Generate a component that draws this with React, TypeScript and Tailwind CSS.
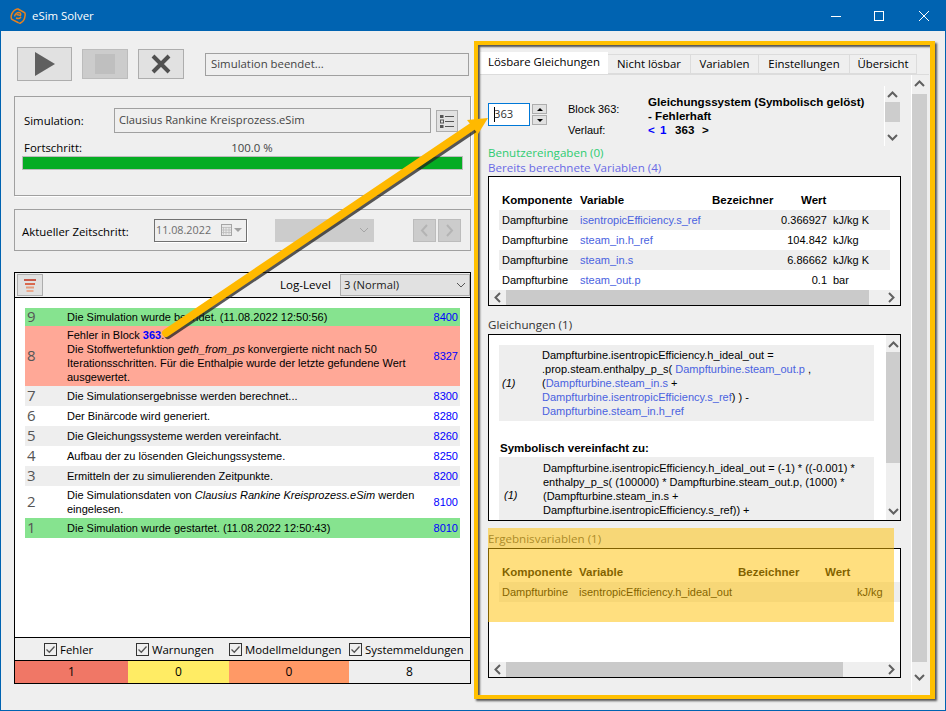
import React from "react";

const ui = { fontFamily: '"Open Sans","Noto Sans",sans-serif' };
const body = { fontFamily: '"Liberation Sans",Arial,sans-serif' };

function Chevron({ dir, cls = "" }: { dir: "up" | "down" | "left" | "right"; cls?: string }) {
  const d = {
    up: "M1 7 L5.5 2.5 L10 7",
    down: "M1 3 L5.5 7.5 L10 3",
    left: "M7 1 L2.5 5.5 L7 10",
    right: "M3 1 L7.5 5.5 L3 10",
  }[dir];
  return (
    <svg width="11" height="11" viewBox="0 0 11 11" className={cls}>
      <path d={d} fill="none" stroke="#606060" strokeWidth="2" />
    </svg>
  );
}

function VScroll({ thumbH, head = "h-[17px]" }: { thumbH: number; head?: string }) {
  return (
    <div className="w-[16px] h-full flex flex-col items-center border-l border-white bg-[#efefef]">
      <div className={`${head} w-full flex items-center justify-center shrink-0 pt-[3px]`}><Chevron dir="up" /></div>
      <div className="flex-1 w-full">
        <div className="w-full bg-[#cdcdcd]" style={{ height: thumbH }} />
      </div>
      <div className="h-[17px] w-full flex items-center justify-center shrink-0"><Chevron dir="down" /></div>
    </div>
  );
}

function HScroll({ thumbW }: { thumbW: number }) {
  return (
    <div className="h-[15px] flex items-center bg-[#efefef]">
      <div className="w-[17px] flex justify-center pl-[1px]"><Chevron dir="left" /></div>
      <div className="flex-1 h-full"><div className="h-full bg-[#cacaca]" style={{ width: thumbW }} /></div>
      <div className="w-[17px] flex justify-center"><Chevron dir="right" /></div>
    </div>
  );
}

const logRows = [
  { n: "9", code: "8400", h: "h-[18px]", bg: "bg-[#86e38f]", t: <>Die Simulation wurde beendet. (11.08.2022 12:50:56)</> },
  {
    n: "8", code: "8327", h: "h-[60px]", bg: "bg-[#ffa897]",
    t: (
      <>
        Fehler in Block <b className="text-[#0000ff] font-bold">363</b>.<br />
        Die Stoffwertefunktion <i>geth_from_ps</i> konvergierte nicht nach 50<br />
        Iterationsschritten. Für die Enthalpie wurde der letzte gefundene Wert<br />
        ausgewertet.
      </>
    ),
  },
  { n: "7", code: "8300", h: "h-[20px]", bg: "bg-[#eeeeee]", t: <>Die Simulationsergebnisse werden berechnet...</> },
  { n: "6", code: "8280", h: "h-[20px]", bg: "bg-white", t: <>Der Binärcode wird generiert.</> },
  { n: "5", code: "8260", h: "h-[20px]", bg: "bg-[#eeeeee]", t: <>Die Gleichungssysteme werden vereinfacht.</> },
  { n: "4", code: "8250", h: "h-[20px]", bg: "bg-white", t: <>Aufbau der zu lösenden Gleichungssysteme.</> },
  { n: "3", code: "8200", h: "h-[20px]", bg: "bg-[#eeeeee]", t: <>Ermitteln der zu simulierenden Zeitpunkte.</> },
  {
    n: "2", code: "8100", h: "h-[32px]", bg: "bg-white",
    t: <>Die Simulationsdaten von <i>Clausius Rankine Kreisprozess.eSim</i> werden<br />eingelesen.</>,
  },
  { n: "1", code: "8010", h: "h-[20px]", bg: "bg-[#86e38f]", t: <>Die Simulation wurde gestartet. (11.08.2022 12:50:43)</> },
];

function Check({ label, w, pl }: { label: string; w: string; pl: string }) {
  return (
    <div className={`${w} ${pl} flex items-center gap-[3px] h-full`}>
      <span className="w-[13px] h-[13px] border border-[#333] bg-[#efefef] flex items-center justify-center">
        <svg width="11" height="11" viewBox="0 0 11 11">
          <path d="M1.5 5.5 L4.3 8.3 L9.5 2.5" fill="none" stroke="#555" strokeWidth="1.3" />
        </svg>
      </span>
      <span className="text-[11.4px] text-black leading-none pt-[1px]" style={ui}>{label}</span>
    </div>
  );
}

function Left() {
  return (
    <div className="ml-[13px] w-[457px] shrink-0 flex flex-col">
      {/* toolbar */}
      <div className="mt-[16px] ml-[3px] h-[34px] flex items-center">
        <div className="w-[55px] h-[34px] bg-[#e1e1e1] border border-[#adadad] flex items-center justify-center">
          <svg width="22" height="26" viewBox="0 0 22 26"><path d="M1 1 L21 13 L1 25 Z" fill="#5f5f5f" /></svg>
        </div>
        <div className="ml-[10px] w-[46px] h-[30px] bg-[#cccccc] border border-[#bcbcbc] flex items-center justify-center">
          <div className="w-[20px] h-[20px] bg-[#bfbfbf]" />
        </div>
        <div className="ml-[10px] w-[46px] h-[30px] bg-[#e1e1e1] border border-[#adadad] flex items-center justify-center">
          <svg width="20" height="20" viewBox="0 0 20 20"><path d="M2 2 L18 18 M18 2 L2 18" stroke="#505050" strokeWidth="4" /></svg>
        </div>
        <div className="ml-[21px] w-[264px] h-[23px] border border-[#a0a0a0] flex items-center pl-[5px] text-[11.4px] text-[#444]" style={ui}>
          Simulation beendet...
        </div>
      </div>

      {/* simulation group */}
      <div className="mt-[15px] h-[100px] border border-[#a0a0a0] shadow-[1px_1px_0_#fff] flex flex-col">
        <div className="mt-[11px] flex items-center h-[25px]">
          <span className="ml-[9px] w-[90px] text-[11.4px] text-black" style={ui}>Simulation:</span>
          <div className="w-[317px] h-[25px] border border-[#a0a0a0] flex items-center pl-[4px] text-[11.2px] text-[#444]" style={ui}>
            Clausius Rankine Kreisprozess.eSim
          </div>
          <div className="ml-[5px] w-[22px] h-[22px] bg-[#e1e1e1] border border-[#adadad] flex items-center justify-center">
            <svg width="16" height="16" viewBox="0 0 16 16">
              <rect x="1" y="2" width="3.5" height="3" fill="#555" />
              <rect x="1.5" y="7" width="3" height="3" fill="none" stroke="#555" />
              <rect x="1" y="12" width="3.5" height="3" fill="#555" />
              <path d="M6 3.5H15M6 8.5H15M6 13.5H15" stroke="#555" strokeWidth="1" />
            </svg>
          </div>
        </div>
        <div className="mt-[7px] h-[16px] flex items-center text-[11.4px]" style={ui}>
          <span className="ml-[9px] w-[169px] text-black">Fortschritt:</span>
          <span className="w-[118px] text-center text-[#444]">100.0 %</span>
        </div>
        <div className="ml-[7px] w-[441px] h-[14px] bg-[#05ac23] border border-[#bcbcbc]" />
      </div>

      {/* time group */}
      <div className="mt-[13px] h-[42px] border border-[#a0a0a0] flex items-center">
        <span className="ml-[7px] w-[132px] text-[11.4px] text-black pt-[3px]" style={ui}>Aktueller Zeitschritt:</span>
        <div className="w-[93px] h-[23px] border border-[#707070] flex items-center pl-[1px] text-[10.8px] text-[#6d6d6d] shadow-[1px_1px_0_#fff]" style={ui}>
          <span className="w-[57px] pt-[1px]">11.08.2022</span>
          <svg className="ml-[8px]" width="11" height="12" viewBox="0 0 11 12">
            <rect x="0.5" y="0.5" width="10" height="11" fill="#e8e8e8" stroke="#a5a5a5" />
            <path d="M2.5 3V10.5M5 3V10.5M8 3V10.5M1 3.5H10M1 6H10M1 8.5H10" stroke="#bdbdbd" strokeWidth="0.8" />
          </svg>
          <span className="ml-[2px] w-0 h-0 border-x-[4px] border-x-transparent border-t-[4px] border-t-[#a0a0a0]" />
        </div>
        <div className="ml-[28px] w-[99px] h-[23px] bg-[#cccccc] flex items-center justify-end pr-[5px]">
          <svg width="10" height="6" viewBox="0 0 10 6"><path d="M1 1 L5 5 L9 1" fill="none" stroke="#a5a5a5" /></svg>
        </div>
        <div className="ml-[39px] w-[23px] h-[23px] bg-[#cccccc] border border-[#bcbcbc] flex items-center justify-center">
          <svg width="9" height="13" viewBox="0 0 9 13"><path d="M7 1 L2 6.5 L7 12" fill="none" stroke="#b4b4b4" strokeWidth="2" /></svg>
        </div>
        <div className="ml-[2px] w-[23px] h-[23px] bg-[#cccccc] border border-[#bcbcbc] flex items-center justify-center">
          <svg width="9" height="13" viewBox="0 0 9 13"><path d="M2 1 L7 6.5 L2 12" fill="none" stroke="#b4b4b4" strokeWidth="2" /></svg>
        </div>
      </div>

      {/* log */}
      <div className="mt-[21px] h-[412px] w-[457px] border border-black flex flex-col">
        <div className="h-[25px] shrink-0 border-b border-black flex items-center">
          <div className="ml-[2px] w-[26px] h-[22px] bg-[#e1e1e1] border border-[#adadad] flex items-center justify-center">
            <svg width="14" height="14" viewBox="0 0 14 14">
              <path d="M1 2H13" stroke="#c85a4a" strokeWidth="2" />
              <path d="M2 6H12" stroke="#d9694f" strokeWidth="2" />
              <path d="M3 9.5H11" stroke="#e59a7a" strokeWidth="2" />
              <path d="M3.5 13H10.5" stroke="#eaa88c" strokeWidth="2" />
            </svg>
          </div>
          <span className="ml-[237px] w-[60px] text-[11.6px] text-black" style={ui}>Log-Level</span>
          <div className="w-[130px] h-[22px] bg-[#e1e1e1] border border-[#adadad] flex items-center justify-between px-[3px] text-[11.2px] text-[#222]" style={ui}>
            <span>3 (Normal)</span>
            <svg width="10" height="6" viewBox="0 0 10 6"><path d="M1 1 L5 5 L9 1" fill="none" stroke="#555" /></svg>
          </div>
        </div>
        <div className="flex-1 bg-white pt-[10px] pl-[10px] pr-[10px]" style={body}>
          {logRows.map((r) => (
            <div key={r.n} className={`${r.h} ${r.bg} flex items-center text-[11px] leading-[14px] text-black`}>
              <span className="w-[42px] shrink-0 pl-[2px] pb-[2px] text-[15px] text-[#555]" style={ui}>{r.n}</span>
              <span className="flex-1 whitespace-nowrap">{r.t}</span>
              <span className="pr-[2px] text-[11px] text-[#0000ff]">{r.code}</span>
            </div>
          ))}
        </div>
        <div className="h-[23px] shrink-0 border-t border-black flex items-center bg-[#efefef]">
          <Check label="Fehler" w="w-[121px]" pl="pl-[29px]" />
          <Check label="Warnungen" w="w-[93px]" pl="pl-0" />
          <Check label="Modellmeldungen" w="w-[120px]" pl="pl-0" />
          <Check label="Systemmeldungen" w="w-[120px]" pl="pl-0" />
        </div>
        <div className="h-[23px] shrink-0 border-t border-black flex text-[12px] text-black" style={ui}>
          <div className="w-[113px] bg-[#f07766] flex items-center justify-center">1</div>
          <div className="w-[101px] bg-[#ffec64] flex items-center justify-center">0</div>
          <div className="w-[120px] bg-[#ff9966] flex items-center justify-center">0</div>
          <div className="flex-1 bg-[#eeeeee] flex items-center justify-center">8</div>
        </div>
      </div>
    </div>
  );
}

const tabs = [
  { t: "Nicht lösbar", w: "w-[83px]" },
  { t: "Variablen", w: "w-[68px]" },
  { t: "Einstellungen", w: "w-[91px]" },
  { t: "Übersicht", w: "w-[67px]" },
];

const vars = [
  { v: "isentropicEfficiency.s_ref", val: "0.366927", u: "kJ/kg K", bg: "bg-[#eeeeee]" },
  { v: "steam_in.h_ref", val: "104.842", u: "kJ/kg", bg: "bg-white" },
  { v: "steam_in.s", val: "6.86662", u: "kJ/kg K", bg: "bg-[#eeeeee]" },
  { v: "steam_out.p", val: "0.1", u: "bar", bg: "bg-white" },
];

const L = ({ children }: { children: React.ReactNode }) => <span className="text-[#4a62e0]">{children}</span>;

function Right() {
  return (
    <div className="ml-[9px] w-[449px] shrink-0 flex flex-col pt-[21px] pb-[18px]">
      <div className="h-[22px] shrink-0 flex items-end text-[11.4px] text-black" style={ui}>
        <div className="w-[128px] h-[22px] bg-white flex items-center justify-center pb-[2px]">Lösbare Gleichungen</div>
        {tabs.map((t) => (
          <div key={t.t} className={`${t.w} h-[20px] bg-[#efefef] border border-l-0 border-[#dcdcdc] flex items-center justify-center`}>{t.t}</div>
        ))}
      </div>
      <div className="flex-1 flex bg-[#efefef] border-t border-[#dcdcdc] min-h-0">
        <div className="w-[432px] shrink-0 pl-[8px] flex flex-col border-r border-white">
          {/* block header */}
          <div className="h-[60px] mt-[11px] shrink-0 flex">
            <div className="w-[396px] flex">
              <div className="mt-[17px] w-[42px] h-[23px] bg-white border border-[#0078d7] flex items-center pl-[5px] text-[11.2px] text-[#333]" style={ui}>
                <span className="w-[1px] h-[15px] bg-black -mr-[1px]" />363
              </div>
              <div className="ml-[2px] mt-[18px] flex flex-col gap-[1px]">
                <div className="w-[15px] h-[10px] bg-[#e1e1e1] border border-[#adadad] flex items-center justify-center">
                  <span className="w-0 h-0 border-x-[3px] border-x-transparent border-b-[3px] border-b-black" />
                </div>
                <div className="w-[15px] h-[10px] bg-[#e1e1e1] border border-[#adadad] flex items-center justify-center">
                  <span className="w-0 h-0 border-x-[3px] border-x-transparent border-t-[3px] border-t-black" />
                </div>
              </div>
              <div className="ml-[21px] w-[80px] text-[11px] text-black" style={body}>
                <div className="mt-[16px] h-[14px] leading-[14px]">Block 363:</div>
                <div className="mt-[7px] h-[14px] leading-[14px]">Verlauf:</div>
              </div>
              <div className="text-[11.6px] leading-[14px] font-bold text-black pt-[9px]" style={body}>
                <div>Gleichungssystem (Symbolisch gelöst)</div>
                <div>- Fehlerhaft</div>
                <div className="flex">
                  <span className="text-[#0000ff] w-[12px]">&lt;</span>
                  <span className="text-[#0000ff] w-[15px]">1</span>
                  <span className="w-[27px]">363</span>
                  <span>&gt;</span>
                </div>
              </div>
            </div>
            <VScroll thumbH={20} head="h-[16px]" />
          </div>

          <div className="-mt-[1px] pb-[1px] text-[11.6px] leading-[15px]" style={ui}>
            <div className="text-[#2ecc71]">Benutzereingaben (0)</div>
            <div className="text-[#6a6ae6]">Bereits berechnete Variablen (4)</div>
          </div>

          <div className="w-[413px] h-[130px] bg-white border border-black flex flex-col shrink-0" style={body}>
            <div className="flex-1 pl-[10px] pr-[10px] text-[11px] leading-[14px] text-black">
              <div className="h-[33px] pt-[16px] flex font-bold text-[11.5px]">
                <span className="w-[3px]" />
                <span className="w-[78px]">Komponente</span>
                <span className="w-[132px]">Variable</span>
                <span className="w-[89px] whitespace-nowrap">Bezeichner</span>
                <span>Wert</span>
              </div>
              {vars.map((r) => (
                <div key={r.v} className={`${r.bg} h-[20px] flex items-center`}>
                  <span className="w-[3px]" />
                  <span className="w-[78px]">Dampfturbine</span>
                  <span className="w-[160px] text-[#4a62e0]">{r.v}</span>
                  <span className="w-[87px] text-right">{r.val}</span>
                  <span className="ml-[6px]">{r.u}</span>
                </div>
              ))}
            </div>
            <HScroll thumbW={363} />
          </div>

          <div className="mt-[11px] h-[17px] text-[11.6px] text-[#333] leading-[15px]" style={ui}>Gleichungen (1)</div>

          <div className="w-[413px] h-[187px] bg-white border border-black flex shrink-0 overflow-hidden" style={body}>
            <div className="w-[396px] shrink-0 pl-[10px] pr-[11px] pt-[10px] text-[11px] leading-[14px] text-black overflow-hidden">
              <div className="h-[76px] bg-[#eeeeee] flex items-center">
                <i className="w-[43px] shrink-0 pl-[3px]">(1)</i>
                <div className="whitespace-nowrap">
                  Dampfturbine.isentropicEfficiency.h_ideal_out =<br />
                  .prop.steam.enthalpy_p_s( <L>Dampfturbine.steam_out.p</L> ,<br />
                  (<L>Dampfturbine.steam_in.s</L> +<br />
                  <L>Dampfturbine.isentropicEfficiency.s_ref</L>) ) -<br />
                  <L>Dampfturbine.steam_in.h_ref</L>
                </div>
              </div>
              <div className="mt-[20px] pl-[1px] h-[16px] leading-[14px] font-bold text-[11.5px]">Symbolisch vereinfacht zu:</div>
              <div className="h-[63px] bg-[#eeeeee] flex items-start pt-[4px]">
                <i className="w-[44px] shrink-0 pl-[5px] mt-[27px]">(1)</i>
                <div className="whitespace-nowrap">
                  Dampfturbine.isentropicEfficiency.h_ideal_out = (-1) * ((-0.001) *<br />
                  enthalpy_p_s( (100000) * Dampfturbine.steam_out.p, (1000) *<br />
                  (Dampfturbine.steam_in.s +<br />
                  Dampfturbine.isentropicEfficiency.s_ref)) +
                </div>
              </div>
            </div>
            <VScroll thumbH={111} />
          </div>

          <div className="mt-[10px] h-[17px] text-[11.6px] text-[#555] leading-[15px]" style={ui}>Ergebnisvariablen (1)</div>

          <div className="w-[413px] h-[130px] bg-white border border-black flex flex-col shrink-0" style={body}>
            <div className="flex-1 pl-[10px] text-[11px] leading-[14px] text-black">
              <div className="h-[33px] pt-[16px] flex font-bold text-[11.5px]">
                <span className="w-[3px]" />
                <span className="w-[77px]">Komponente</span>
                <span className="w-[159px]">Variable</span>
                <span className="w-[87px] whitespace-nowrap">Bezeichner</span>
                <span>Wert</span>
              </div>
              <div className="bg-[#eeeeee] h-[20px] flex items-center">
                <span className="w-[3px]" />
                <span className="w-[77px]">Dampfturbine</span>
                <span className="w-[278px]">isentropicEfficiency.h_ideal_out</span>
                <span>kJ/kg</span>
              </div>
            </div>
            <HScroll thumbW={337} />
          </div>
        </div>
        <div className="w-[15px] shrink-0 flex flex-col items-center">
          <div className="h-[19px] w-full flex items-center justify-center"><Chevron dir="up" /></div>
          <div className="w-full h-[568px] bg-[#cdcdcd]" />
          <div className="flex-1 w-full flex items-center justify-center"><Chevron dir="down" /></div>
        </div>
      </div>
    </div>
  );
}

export default function App() {
  return (
    <div className="relative w-[946px] h-[711px] overflow-hidden bg-[#efefef] border-x border-b border-[#0063b1] flex flex-col">
      <div className="h-[31px] shrink-0 bg-[#0063b1] flex items-center text-white">
        <svg className="ml-[9px]" width="16" height="16" viewBox="0 0 16 16">
          <path d="M8 1 L14.5 4.5 Q15.5 5.5 15 8 Q14.5 13 10.5 15 Q9.5 15.5 8 14.5 L2 11.5 Q1 10.5 1.2 8 Q2 3.5 6 1.4 Q7 0.7 8 1 Z" fill="none" stroke="#e8821e" strokeWidth="1.5" />
          <path d="M4.5 8.5 Q5.5 4.5 9 4.5 Q11.5 5 10.5 7.5 L6.5 6.5 M6 10 Q9 11.5 11 9" fill="none" stroke="#e8821e" strokeWidth="1.4" />
        </svg>
        <span className="ml-[6px] text-[11.4px]" style={ui}>eSim Solver</span>
        <div className="ml-auto flex items-center">
          <svg width="12" height="12" viewBox="0 0 12 12"><path d="M1 6.5H11" stroke="#fff" /></svg>
          <svg className="ml-[31px]" width="12" height="12" viewBox="0 0 12 12"><rect x="1.5" y="1.5" width="9" height="9" fill="none" stroke="#fff" /></svg>
          <svg className="ml-[33px] mr-[15px]" width="12" height="12" viewBox="0 0 12 12"><path d="M1 1L11 11M11 1L1 11" stroke="#fff" /></svg>
        </div>
      </div>
      <div className="flex-1 flex min-h-0">
        <Left />
        <Right />
      </div>

      {/* annotation overlays */}
      <div className="absolute left-[487px] top-[528px] w-[406px] h-[94px] bg-[#ffc000]/50" />
      <div className="absolute left-[473px] top-[41px] w-[461px] h-[658px] border-4 border-r-[5px] border-[#ffc000] shadow-[2px_2px_2px_rgba(0,0,0,0.65),inset_2px_2px_2px_rgba(0,0,0,0.65)]" />
      <svg className="absolute left-[-1px] top-0 pointer-events-none" width="946" height="711" viewBox="0 0 946 711">
        <g transform="translate(2 2)" opacity="0.75">
          <path d="M166 333 L472 127" stroke="#222" strokeWidth="8" strokeLinecap="round" fill="none" />
        </g>
        <path d="M166 333 L476 124" stroke="#ffb900" strokeWidth="8" strokeLinecap="round" fill="none" />
        <path d="M488 118 L467 120 L478 134 Z" fill="#ffb900" />
      </svg>
    </div>
  );
}
